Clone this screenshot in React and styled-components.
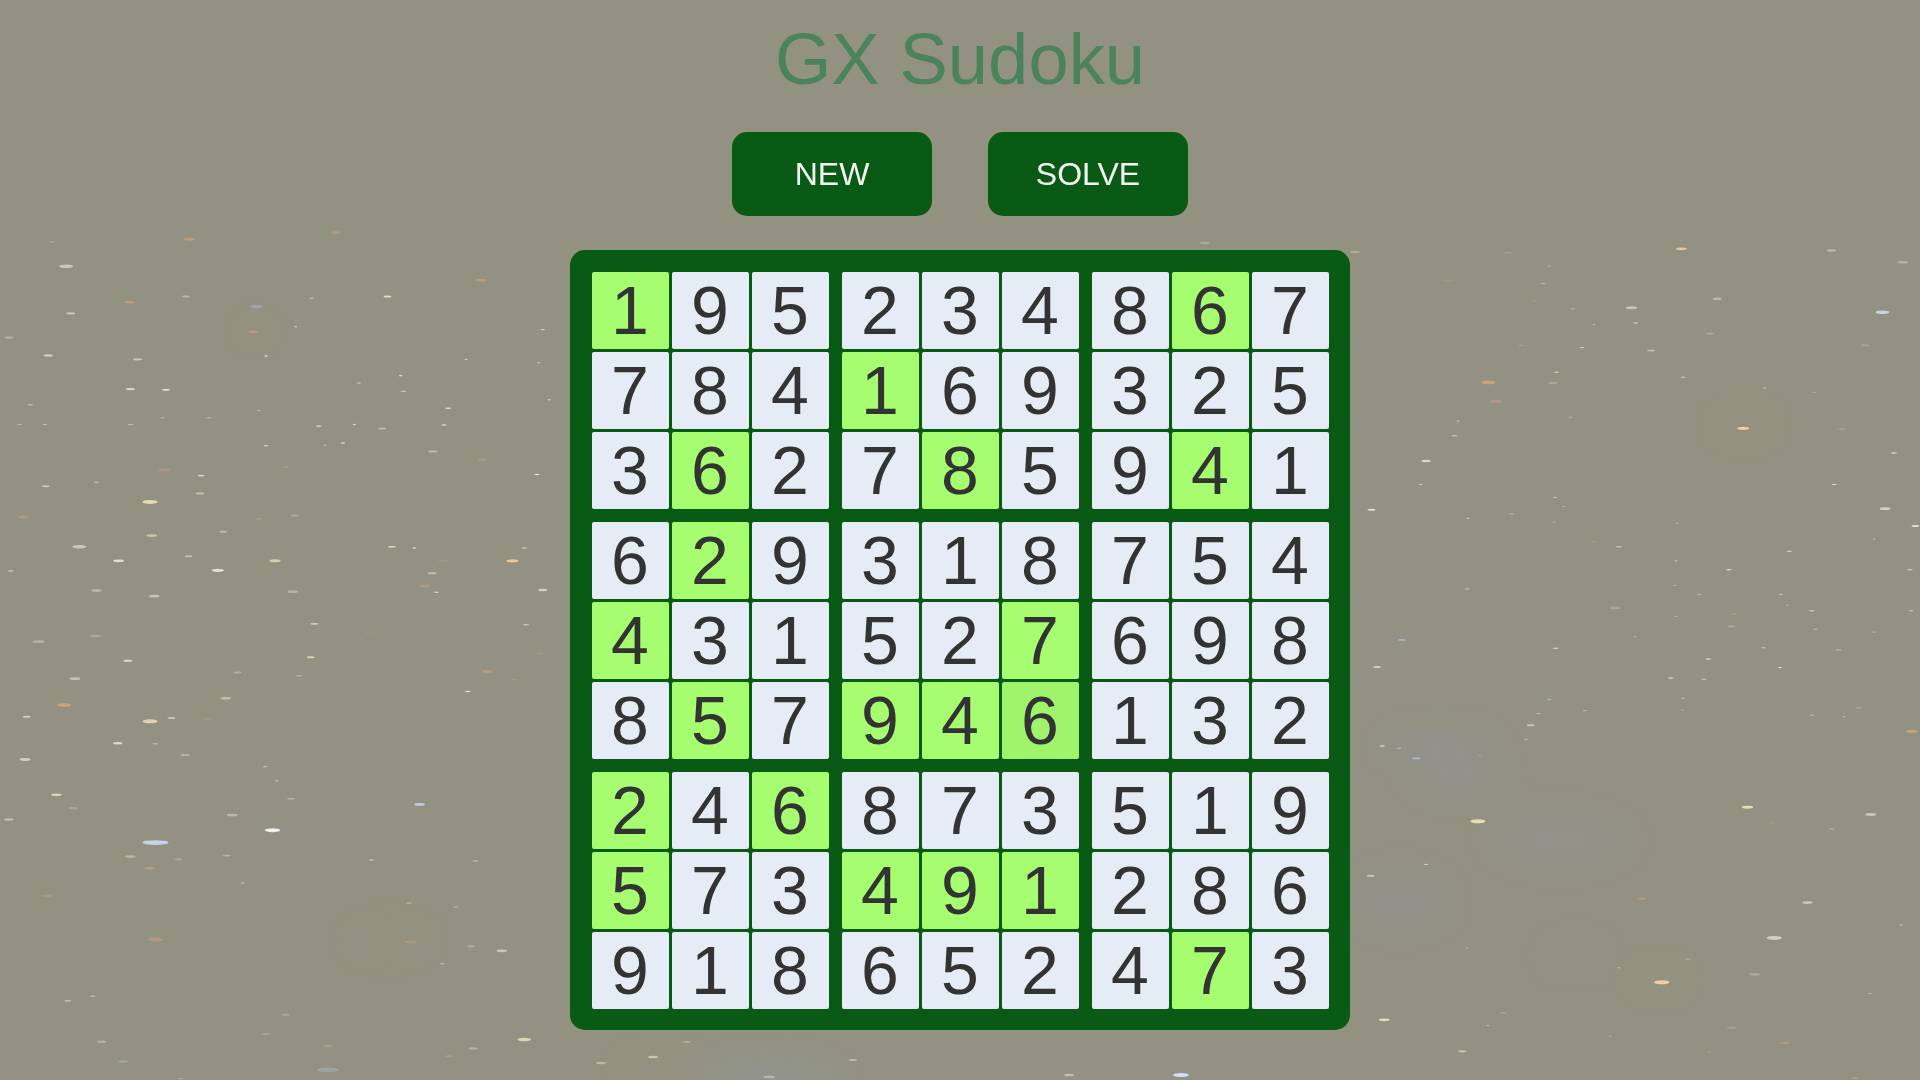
import styled, { createGlobalStyle } from 'styled-components';

const GlobalStyle = createGlobalStyle`
  html {
    background: #939282;
  }

  body {
    margin: 0;
    font-family: 'Liberation Sans', Arial, sans-serif;
  }
`;

const Sky = styled.svg`
  position: fixed;
  top: 0;
  left: 0;
  width: 1920px;
  height: 1080px;
  z-index: -1;
`;

const Page = styled.main`
  height: 1080px;
  overflow: hidden;
  display: flex;
  flex-direction: column;
  align-items: center;
  padding-top: 18px;
  box-sizing: border-box;
`;

const Title = styled.h1`
  margin: 0 0 32px;
  font-size: 72.4px;
  line-height: 82px;
  font-weight: 400;
  color: #4b835c;
`;

const Actions = styled.div`
  display: flex;
  gap: 56px;
  margin-bottom: 34px;
`;

const ActionButton = styled.button`
  width: 200px;
  height: 84px;
  border: none;
  border-radius: 15px;
  background: #095a14;
  color: #f2f7f2;
  font-family: inherit;
  font-size: 32px;
  cursor: pointer;
`;

const Board = styled.div`
  width: 780px;
  height: 780px;
  box-sizing: border-box;
  padding: 21.5px;
  border-radius: 15px;
  background: #095a14;
  display: grid;
  grid-template-columns: repeat(3, 237px);
  grid-template-rows: repeat(3, 237px);
  gap: 13px;
`;

const Block = styled.div`
  display: grid;
  grid-template-columns: repeat(3, 77px);
  grid-template-rows: repeat(3, 77px);
  gap: 3px;
`;

const tones = {
  plain: '#e6ecf5',
  given: '#a6fd70',
  hovered: '#9ff46b',
};

const Cell = styled.div`
  display: flex;
  align-items: center;
  justify-content: center;
  border-radius: 2px;
  background: ${(p) => tones[p.$tone]};
  color: #333333;
  font-size: 68px;
  user-select: none;
`;

const SOLUTION = [
  '195234867',
  '784169325',
  '362785941',
  '629318754',
  '431527698',
  '857946132',
  '246873519',
  '573491286',
  '918652473',
];

const GIVEN = [
  '100000010',
  '000100000',
  '010010010',
  '010000000',
  '100001000',
  '010111000',
  '101000000',
  '100111000',
  '000000010',
];

const HOVERED = '5-5';

const STAR_TONES = {
  w: '#efeee0',
  y: '#f5e8c0',
  o: '#dda878',
  r: '#d89a90',
  b: '#b4c2ea',
  W: '#ffffff',
  B: '#cfdcff',
  O: '#ffd9a8',
};

// star field read off crops of the left and right margins: x, y, width, tone, alpha
const LEFT_STARS = [
  [530,70,35,'o',.6],[940,58,35,'o',.5],[145,75,20,'w',.25],[185,118,45,'w',.7],[362,182,35,'o',.6],[520,172,25,'w',.5],
  [198,202,30,'w',.7],[718,190,40,'b',.5],[710,235,35,'r',.7],[872,175,15,'w',.6],[1085,172,25,'y',1],[1348,143,35,'o',.6],
  [828,226,10,'w',.7],[745,278,12,'w',.9],[135,277,30,'w',.8],[25,245,30,'w',.4],[385,284,30,'w',.7],[365,337,30,'w',.9],
  [465,338,25,'w',1],[85,365,20,'w',.5],[1005,326,15,'w',.6],[1122,313,12,'w',1],[1130,341,20,'w',.6],[1255,371,20,'w',1],
  [1305,284,12,'w',.8],[1520,231,15,'w',.8],[1508,290,10,'w',.7],[1538,356,10,'w',.8],[1243,401,18,'w',.9],[893,403,20,'w',.8],
  [992,400,12,'w',.8],[1070,407,25,'w',.5],[910,437,12,'b',.8],[960,433,15,'w',.9],[745,438,15,'w',.8],[55,400,15,'w',.5],
  [125,400,15,'w',.6],[365,400,20,'w',.5],[455,388,15,'w',.4],[585,388,20,'w',.4],[725,375,15,'w',.4],[1212,448,30,'w',.5],
  [1350,463,30,'o',.4],[1503,489,18,'w',1],[563,491,22,'w',.9],[460,481,40,'o',.4],[800,476,20,'o',.5],[270,503,20,'w',.6],
  [128,510,25,'w',.7],[420,538,50,'y',1],[560,523,28,'y',.6],[65,565,40,'o',.5],[725,568,25,'o',.5],[825,562,25,'w',.3],
  [425,598,35,'y',.7],[625,591,25,'w',.5],[222,618,45,'w',.7],[332,643,35,'w',1],[30,661,20,'w',.7],[528,635,25,'w',.6],
  [610,660,40,'w',1],[770,643,38,'y',.8],[1097,618,25,'y',.8],[1160,620,12,'w',1],[1435,643,40,'O',.9],[1240,643,30,'o',.3],
  [1468,620,18,'w',.7],[1520,695,30,'w',.8],[1210,665,30,'w',.5],[1190,688,40,'o',.4],[1222,699,15,'w',.8],[270,696,35,'w',.5],
  [432,706,35,'w',.6],[820,698,35,'w',.4],[880,755,25,'w',.7],[1473,757,20,'w',.7],[268,777,35,'w',.3],[108,787,40,'w',.4],
  [358,821,30,'w',.8],[870,815,25,'y',.9],[1040,772,35,'o',.2],[1512,808,25,'o',.4],[1365,840,35,'o',.6],[1440,855,20,'o',.4],
  [210,853,35,'w',.6],[665,842,25,'w',.4],[838,848,20,'w',.4],[1310,876,18,'w',1],[180,900,45,'o',.9],[632,888,35,'y',.6],
  [420,929,50,'y',.9],[480,923,25,'w',.7],[75,921,25,'w',.8],[580,925,25,'o',.3],[330,968,30,'w',.9],[435,969,20,'w',.5],
  [70,997,35,'w',.8],[518,989,30,'w',.4],[742,1010,15,'w',.6],[775,1035,15,'w',.5],[815,1067,25,'w',.4],[158,1060,35,'y',.9],
  [205,1084,30,'w',.3],[650,1096,35,'w',.5],[25,1104,30,'w',.6],[435,1145,85,'B',1],[763,1123,50,'W',1],[1175,1077,35,'B',.9],
  [365,1170,35,'y',.5],[420,1191,35,'o',.6],[500,1175,25,'w',.3],[635,1168,25,'w',.4],[1040,1176,18,'w',.6],[1332,1178,18,'w',.6],
  [680,1217,15,'w',.5],[130,1240,40,'o',.4],[1145,1253,20,'w',.4],[1275,1260,20,'w',.4],[435,1318,50,'o',.5],[1150,1322,40,'o',.4],
  [1320,1330,25,'w',.4],[1405,1338,35,'w',.7],[1238,1361,18,'w',.5],[190,1427,22,'w',.6],[260,1419,15,'w',.6],[800,1452,25,'w',.3],
  [285,1500,30,'w',.4],[745,1486,25,'w',.3],[1468,1496,45,'y',.9],[1325,1512,30,'w',.4],[918,1508,30,'o',.4],[1258,1526,25,'o',.5],
  [345,1535,30,'b',.5],[918,1550,70,'b',.4],[505,1566,20,'w',.3],
];

const RIGHT_STARS = [
  [900,87,35,'O',.9],[1320,90,30,'w',.5],[1520,111,35,'w',.4],[1463,200,45,'B',1],[760,192,38,'w',.7],[1000,176,30,'w',.5],
  [248,144,35,'o',.3],[415,94,25,'w',.2],[530,118,15,'w',.3],[512,149,20,'w',.4],[490,180,20,'o',.3],[595,194,15,'w',.6],
  [655,222,10,'w',.5],[772,219,15,'w',.8],[980,238,25,'w',.3],[450,259,15,'b',.5],[622,263,15,'w',.8],[815,268,25,'w',.6],
  [1415,259,25,'w',.3],[550,307,15,'y',.8],[360,325,45,'o',.9],[540,326,30,'w',.3],[905,316,18,'w',.6],[380,359,40,'r',.6],
  [1133,335,12,'w',.5],[1272,343,15,'w',.3],[1073,407,40,'O',1],[590,387,15,'w',.4],[275,394,12,'w',.7],[265,420,20,'w',.6],
  [1350,408,25,'w',.2],[185,465,30,'w',.9],[170,507,12,'w',.7],[1495,451,20,'w',.8],[1328,507,15,'w',.9],[32,552,25,'w',1],
  [1470,550,35,'w',.8],[1555,581,25,'w',1],[546,530,15,'w',.6],[570,546,12,'w',.4],[302,567,12,'w',.6],[425,559,15,'w',.4],
  [543,574,15,'w',.4],[655,609,15,'o',.4],[725,618,20,'w',.7],[888,576,10,'w',.4],[1440,604,10,'w',.5],[1202,626,18,'w',.7],
  [1033,659,18,'w',.9],[1540,659,18,'w',.8],[885,643,12,'w',.7],[300,693,18,'w',.6],[882,687,10,'w',.5],[950,703,15,'w',.4],
  [1178,703,12,'w',.6],[1197,722,10,'w',.5],[715,727,35,'w',.3],[1265,732,20,'w',.7],[1543,732,15,'w',.6],[1048,738,18,'o',.6],
  [885,742,12,'w',.4],[117,784,22,'b',.9],[770,778,12,'w',.4],[1275,765,15,'w',.5],[1040,760,25,'w',.3],[1440,770,15,'w',.4],
  [548,799,20,'w',.7],[1130,798,15,'w',.6],[1340,802,20,'w',.5],[48,832,25,'w',.8],[975,818,18,'w',.9],[1176,833,12,'w',.9],
  [870,852,20,'w',.8],[963,854,18,'w',.6],[905,888,15,'w',.5],[530,890,15,'b',.8],[630,910,15,'w',.5],[478,936,25,'w',.7],
  [500,915,15,'w',.5],[903,909,12,'w',.4],[1265,918,12,'w',.6],[1355,921,12,'w',.6],[1395,905,20,'w',.3],[62,973,18,'w',.9],
  [110,977,15,'w',.5],[158,995,30,'b',.8],[335,990,15,'b',.4],[465,961,15,'w',.4],[1545,947,40,'o',.8],[1085,1082,38,'y',1],
  [1430,1095,35,'w',.7],[330,1107,50,'y',1],[1155,1110,20,'o',.3],[1320,1121,20,'w',.4],[185,1184,15,'w',.7],[30,1204,25,'w',.7],
  [1253,1252,35,'w',.7],[790,1245,25,'o',.6],[1160,1315,50,'w',.8],[1515,1292,15,'w',.5],[845,1394,50,'O',1],[1428,1414,15,'w',.4],
  [1105,1380,35,'w',.3],[918,1353,20,'w',.3],[725,1368,15,'w',.4],[300,1333,15,'w',.3],[68,1461,35,'y',1],[287,1517,28,'y',.7],
  [358,1471,12,'w',.4],[400,1449,20,'w',.3],[1190,1502,30,'o',.6],[978,1518,15,'o',.7],[1040,1475,30,'w',.2],[700,1490,12,'w',.4],
  [1385,1565,25,'o',.5],
];

// already in page pixels, under the board
const BOTTOM_STARS = [
  [1181,1075,8,'B',1],[769,1077,6,'b',.7],[1069,1075,5,'w',.5],[853,1060,4,'w',.5],[653,1057,5,'y',.6],
  [601,1063,5,'w',.4],[687,1042,4,'w',.3],[1205,243,5,'w',.25],[1355,252,5,'w',.25],
];

const NEBULAE = [
  [1440,745,60,14,'#8f93a8'],[1460,780,50,14,'#8f93a8'],[1560,840,70,26,'#93929f'],[1400,900,50,30,'#92929f'],
  [1575,955,30,14,'#9a8f90'],[795,745,50,12,'#92919e'],[1745,425,30,10,'#a59080'],[255,330,10,8,'#a08f80'],
  [390,940,40,14,'#9a9080'],[770,1080,70,22,'#8f9aa4'],[660,1070,40,16,'#a08f80'],[1660,980,26,10,'#a59080'],
];

function toStar([zx, zy, width, tone, alpha], left) {
  // crops came back stretched 2.8x across and 1.78x down
  const cx = left + zx / 2.8;
  const cy = 200 + zy / 1.782;
  return { cx, cy, rx: width / 6.5, tone, alpha: alpha * 0.85 };
}

const STARS = [
  ...LEFT_STARS.map((s) => toStar(s, 0)),
  ...RIGHT_STARS.map((s) => toStar(s, 1360)),
  ...BOTTOM_STARS.map(([cx, cy, rx, tone, alpha]) => ({ cx, cy, rx, tone, alpha })),
];

function StarField() {
  return (
    <Sky viewBox='0 0 1920 1080' aria-hidden='true'>
      <defs>
        <filter id='soft' x='-50%' y='-50%' width='200%' height='200%'>
          <feGaussianBlur stdDeviation='0.5' />
        </filter>
        <filter id='haze' x='-50%' y='-50%' width='200%' height='200%'>
          <feGaussianBlur stdDeviation='14' />
        </filter>
      </defs>
      <g filter='url(#haze)' opacity='0.3'>
        {NEBULAE.map(([cx, cy, rx, ry, fill], i) => (
          <ellipse key={i} cx={cx} cy={cy} rx={rx} ry={ry} fill={fill} />
        ))}
      </g>
      <g filter='url(#soft)'>
        {STARS.map((s, i) => (
          <ellipse
            key={i}
            cx={s.cx}
            cy={s.cy}
            rx={s.rx}
            ry={Math.min(2.4, Math.max(0.7, s.rx * 0.26))}
            fill={STAR_TONES[s.tone]}
            opacity={s.alpha}
          />
        ))}
      </g>
    </Sky>
  );
}

function cellTone(row, col) {
  if (`${row}-${col}` === HOVERED) return 'hovered';
  return GIVEN[row][col] === '1' ? 'given' : 'plain';
}

function App() {
  const blocks = [];
  for (let b = 0; b < 9; b++) {
    const startRow = Math.floor(b / 3) * 3;
    const startCol = (b % 3) * 3;
    const cells = [];
    for (let r = startRow; r < startRow + 3; r++) {
      for (let c = startCol; c < startCol + 3; c++) {
        cells.push(
          <Cell key={`${r}-${c}`} $tone={cellTone(r, c)}>
            {SOLUTION[r][c]}
          </Cell>
        );
      }
    }
    blocks.push(<Block key={b}>{cells}</Block>);
  }

  return (
    <>
      <GlobalStyle />
      <StarField />
      <Page>
        <Title>GX Sudoku</Title>
        <Actions>
          <ActionButton>NEW</ActionButton>
          <ActionButton>SOLVE</ActionButton>
        </Actions>
        <Board>{blocks}</Board>
      </Page>
    </>
  );
}

export default App;
